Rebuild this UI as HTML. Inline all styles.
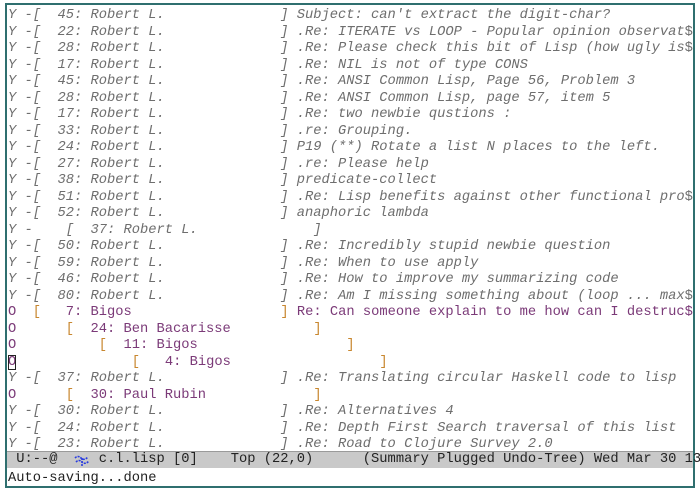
<!DOCTYPE html>
<html><head><meta charset="utf-8">
<style>
html,body{margin:0;padding:0;background:#fff;width:700px;height:492px;overflow:hidden}
#frame{position:absolute;left:5px;top:3px;width:690px;height:485px;border:2px solid #2f6f6f;box-sizing:border-box}
pre{margin:0;font-family:"Liberation Mono",monospace;font-size:13.75px;line-height:16.5px;white-space:pre}
#buf{position:absolute;left:8px;top:8px}
.g{color:#6e6e6e;font-style:italic}
.d{font-style:normal}
.p{color:#7b3a78}
.b{color:#c8872f}
#ml{position:absolute;left:7px;top:451px;width:686px;height:17px;background:#c9c9c9;border-top:1px solid #9a9a9a;box-sizing:border-box}
#mlt{position:absolute;left:8px;top:452px;color:#222}
#echo{position:absolute;left:8px;top:471px;color:#222}
.cur{outline:1px solid #222;outline-offset:-1px}
</style></head><body>
<div id="frame"></div>
<pre id="buf"><span class="g">Y -[  45: Robert L.              ] Subject: can't extract the digit-char?</span>
<span class="g">Y -[  22: Robert L.              ] .Re: ITERATE vs LOOP - Popular opinion observat<span class="d">$</span></span>
<span class="g">Y -[  28: Robert L.              ] .Re: Please check this bit of Lisp (how ugly is<span class="d">$</span></span>
<span class="g">Y -[  17: Robert L.              ] .Re: NIL is not of type CONS</span>
<span class="g">Y -[  45: Robert L.              ] .Re: ANSI Common Lisp, Page 56, Problem 3</span>
<span class="g">Y -[  28: Robert L.              ] .Re: ANSI Common Lisp, page 57, item 5</span>
<span class="g">Y -[  17: Robert L.              ] .Re: two newbie qustions :</span>
<span class="g">Y -[  33: Robert L.              ] .re: Grouping.</span>
<span class="g">Y -[  24: Robert L.              ] P19 (**) Rotate a list N places to the left.</span>
<span class="g">Y -[  27: Robert L.              ] .re: Please help</span>
<span class="g">Y -[  38: Robert L.              ] predicate-collect</span>
<span class="g">Y -[  51: Robert L.              ] .Re: Lisp benefits against other functional pro<span class="d">$</span></span>
<span class="g">Y -[  52: Robert L.              ] anaphoric lambda</span>
<span class="g">Y -    [  37: Robert L.              ]</span>
<span class="g">Y -[  50: Robert L.              ] .Re: Incredibly stupid newbie question</span>
<span class="g">Y -[  59: Robert L.              ] .Re: When to use apply</span>
<span class="g">Y -[  46: Robert L.              ] .Re: How to improve my summarizing code</span>
<span class="g">Y -[  80: Robert L.              ] .Re: Am I missing something about (loop ... max<span class="d">$</span></span>
<span class="p">O  <span class="b">[</span>   7: Bigos                  <span class="b">]</span> Re: Can someone explain to me how can I destruc$</span>
<span class="p">O      <span class="b">[</span>  24: Ben Bacarisse          <span class="b">]</span></span>
<span class="p">O          <span class="b">[</span>  11: Bigos                  <span class="b">]</span></span>
<span class="p"><span class="cur">O</span>              <span class="b">[</span>   4: Bigos                  <span class="b">]</span></span>
<span class="g">Y -[  37: Robert L.              ] .Re: Translating circular Haskell code to lisp</span>
<span class="p">O      <span class="b">[</span>  30: Paul Rubin             <span class="b">]</span></span>
<span class="g">Y -[  30: Robert L.              ] .Re: Alternatives 4</span>
<span class="g">Y -[  24: Robert L.              ] .Re: Depth First Search traversal of this list</span>
<span class="g">Y -[  23: Robert L.              ] .Re: Road to Clojure Survey 2.0</span></pre>
<div id="ml"></div>
<pre id="mlt"> U:--@     c.l.lisp [0]    Top (22,0)      (Summary Plugged Undo-Tree) Wed Mar 30 13</pre>
<svg style="position:absolute;left:74px;top:454px" width="16" height="13" viewBox="0 0 16 13"><path d="M1 4 Q4 1 7 4 T14 3 M2 8 Q5 5 8 8 T15 7 M8 4 L8 12" stroke="#2a3de0" stroke-width="1.6" fill="none" stroke-dasharray="2 1"/></svg>
<pre id="echo">Auto-saving...done</pre>
</body></html>
